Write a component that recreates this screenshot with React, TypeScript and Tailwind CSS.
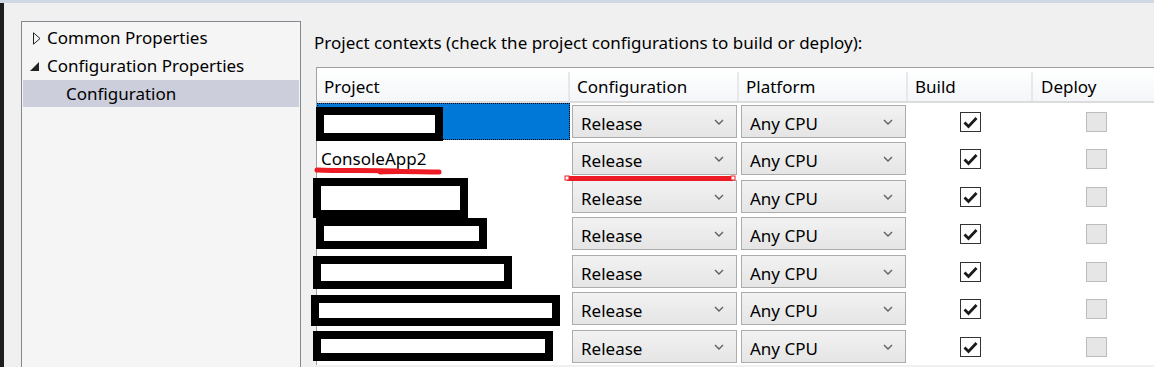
const rows = [
  { name: "", redact: { l: -1, t: 4, w: 127, h: 34 }, selected: true },
  { name: "ConsoleApp2" },
  { name: "", redact: { l: -4, t: 0, w: 155, h: 40 } },
  { name: "", redact: { l: -1, t: 3, w: 171, h: 31 } },
  { name: "", redact: { l: -4, t: 3, w: 199, h: 33 } },
  { name: "", redact: { l: -6, t: 5, w: 249, h: 31 } },
  { name: "", redact: { l: -4, t: 3, w: 240, h: 30 } },
];

const rowHeights = [37, 38, 37, 38, 37, 38, 37];

function Chevron() {
  return (
    <svg width="10" height="6" viewBox="0 0 10 6" className="shrink-0 -mt-[3px]">
      <path d="M1 1 L5 5 L9 1" fill="none" stroke="#606060" strokeWidth="1.4" />
    </svg>
  );
}

function Combo({ value }: { value: string }) {
  return (
    <div className="mx-[2px] mt-[2px] h-[33px] w-[165px] flex items-center justify-between pl-[8px] pr-[12px] pt-[4px] border border-[#acacac] bg-gradient-to-b from-[#f2f2f2] to-[#e5e5e5]">
      <span>{value}</span>
      <Chevron />
    </div>
  );
}

function CheckBox({ checked }: { checked: boolean }) {
  if (!checked) {
    return <div className="w-[21px] h-[20px] border border-[#bcbcbc] bg-[#e6e6e6]" />;
  }
  return (
    <div className="w-[21px] h-[20px] border border-[#333333] bg-white flex items-center justify-center">
      <svg width="15" height="13" viewBox="0 0 15 13">
        <path d="M1.5 6.5 L5.5 10.5 L13.5 2" fill="none" stroke="#1a1a1a" strokeWidth="2.8" />
      </svg>
    </div>
  );
}

export default function App() {
  return (
    <div
      className="w-[1154px] h-[367px] bg-[#f0f0f0] overflow-hidden flex flex-col text-[17px] text-black"
      style={{ fontFamily: '"Noto Sans", "Open Sans", sans-serif' }}
    >
      {/* top strip */}
      <div className="h-[3px] bg-[#d0d7e5] shrink-0" />

      <div className="flex flex-1 min-h-0">
        {/* dark edge of the neighbouring window */}
        <div className="w-[4px] bg-[#1e1e1e] shrink-0" />

        {/* tree panel */}
        <div className="pl-[17px] pt-[18px] shrink-0">
          <div className="w-[280px] h-[400px] border border-[#828790] bg-[#f5f5f5] pt-[2px] px-[1px]">
            <div className="h-[28px] flex items-center pl-[10px]">
              <svg width="8" height="13" viewBox="0 0 8 13" className="mr-[6px]">
                <path d="M0.5 0.8 L7 6.5 L0.5 12.2 Z" fill="none" stroke="#222" strokeWidth="1" />
              </svg>
              <span>Common Properties</span>
            </div>
            <div className="h-[28px] flex items-center pl-[7px]">
              <svg width="9" height="9" viewBox="0 0 9 9" className="mr-[8px]">
                <path d="M9 0 L9 9 L0 9 Z" fill="#222" />
              </svg>
              <span>Configuration Properties</span>
            </div>
            <div className="h-[27px] flex items-center pl-[43px] bg-[#cccedb]">Configuration</div>
          </div>
        </div>

        {/* right side */}
        <div className="flex-1 min-w-0 pl-[13px] pt-[28px]">
          <div className="h-[23px] leading-[23px] whitespace-nowrap">
            Project contexts (check the project configurations to build or deploy):
          </div>
          <div className="mt-[13px] ml-[2px] border-l border-t border-[#a0a0a0] bg-white w-[900px]">
            {/* header */}
            <div className="h-[35px] flex pt-[4px] bg-gradient-to-b from-white to-[#f4f6f9] border-b-2 border-[#dcdcdc]">
              <div className="w-[253px] pl-[7px] flex items-center border-r-2 border-[#e6e8ec]">Project</div>
              <div className="w-[169px] pl-[7px] flex items-center border-r-2 border-[#e6e8ec]">Configuration</div>
              <div className="w-[169px] pl-[7px] flex items-center border-r-2 border-[#e6e8ec]">Platform</div>
              <div className="w-[125px] pl-[7px] flex items-center border-r-2 border-[#e6e8ec]">Build</div>
              <div className="w-[127px] pl-[8px] flex items-center border-r-2 border-[#e6e8ec]">Deploy</div>
            </div>

            {/* body */}
            {rows.map((r, i) => (
              <div key={i} className="flex" style={{ height: rowHeights[i] }}>
                <div className="w-[253px] relative">
                  {r.selected && (
                    <div className="absolute inset-x-0 top-0 h-[37px] bg-[#0078d7] border border-dotted border-black" />
                  )}
                  {r.name && (
                    <div className="absolute left-[4px] top-[7px] leading-[24px]">{r.name}</div>
                  )}
                  {r.redact && (
                    <div
                      className="absolute border-[8px] border-black bg-white z-10"
                      style={{ left: r.redact.l, top: r.redact.t, width: r.redact.w, height: r.redact.h }}
                    />
                  )}
                </div>
                <div className="w-[169px]">
                  <Combo value="Release" />
                </div>
                <div className="w-[169px]">
                  <Combo value="Any CPU" />
                </div>
                <div className="w-[125px] flex justify-center pt-[9px]">
                  <CheckBox checked />
                </div>
                <div className="w-[127px] flex justify-center pt-[9px]">
                  <CheckBox checked={false} />
                </div>
              </div>
            ))}
          </div>
        </div>
      </div>

      {/* hand-drawn red annotations */}
      <svg className="absolute left-0 top-0 pointer-events-none" width="1154" height="367">
        <path d="M317 170 C 340 171, 370 170, 398 171" stroke="#ed1c24" strokeWidth="5" fill="none" strokeLinecap="round" />
        <path d="M380 172 C 400 171, 420 172, 439 172" stroke="#ed1c24" strokeWidth="5" fill="none" strokeLinecap="round" />
        <rect x="567" y="176" width="166" height="5" fill="#ed1c24" />
        <rect x="565" y="176" width="4" height="4" fill="white" stroke="#ed1c24" strokeWidth="1" />
        <rect x="731" y="176" width="4" height="4" fill="white" stroke="#ed1c24" strokeWidth="1" />
      </svg>
    </div>
  );
}
